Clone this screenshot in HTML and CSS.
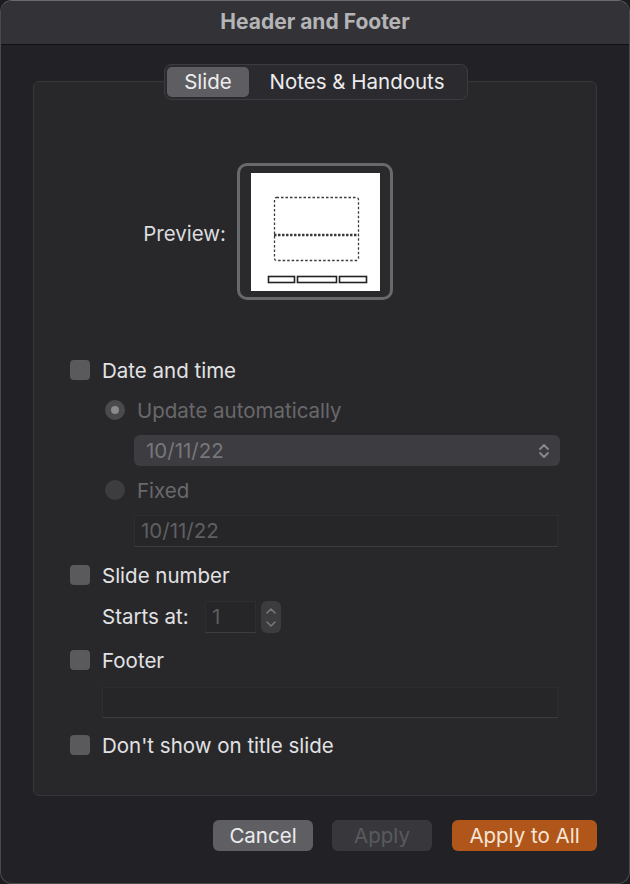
FILE: index.html
```html
<!DOCTYPE html>
<html>
<head>
<meta charset="utf-8">
<link rel="stylesheet" href="styles.css">
</head>
<body>
<div class="window">
  <div class="titlebar">Header and Footer</div>
  <div class="content">
    <div class="tabs">
      <div class="tab active">Slide</div>
      <div class="tab">Notes &amp; Handouts</div>
    </div>
    <div class="group">
      <div class="preview-row">
        <div class="preview-label">Preview:</div>
        <div class="preview-frame">
          <div class="slide">
            <svg width="129" height="118" viewBox="0 0 129 118">
              <rect x="23.5" y="24.5" width="84" height="63" rx="2" fill="none" stroke="#3a3a3a" stroke-width="1.3" stroke-dasharray="2.5 2"/>
              <line x1="23" y1="62" x2="108" y2="62" stroke="#3a3a3a" stroke-width="2.4" stroke-dasharray="2.5 1.5"/>
              <rect x="17.5" y="103.5" width="26" height="6" fill="none" stroke="#222" stroke-width="1.6"/>
              <rect x="46.5" y="103.5" width="39" height="6" fill="none" stroke="#222" stroke-width="1.6"/>
              <rect x="88.5" y="103.5" width="27" height="6" fill="none" stroke="#222" stroke-width="1.6"/>
            </svg>
          </div>
        </div>
      </div>

      <div class="row check-row r-date">
        <span class="checkbox"></span><span class="label">Date and time</span>
      </div>
      <div class="row radio-row r-update">
        <span class="radio selected"></span><span class="label dim">Update automatically</span>
      </div>
      <div class="popup">
        <span class="popup-text">10/11/22</span>
        <svg class="updown" width="12" height="18" viewBox="0 0 12 18">
          <polyline points="2,7 6,3 10,7" fill="none" stroke="#8a8a8d" stroke-width="1.8" stroke-linecap="round" stroke-linejoin="round"/>
          <polyline points="2,11 6,15 10,11" fill="none" stroke="#8a8a8d" stroke-width="1.8" stroke-linecap="round" stroke-linejoin="round"/>
        </svg>
      </div>
      <div class="row radio-row r-fixed">
        <span class="radio"></span><span class="label dim">Fixed</span>
      </div>
      <div class="field date-field">10/11/22</div>

      <div class="row check-row r-slide">
        <span class="checkbox"></span><span class="label">Slide number</span>
      </div>
      <div class="starts-row">
        <span class="label">Starts at:</span>
        <div class="num-field">1</div>
        <div class="stepper">
          <svg width="20" height="32" viewBox="0 0 20 32">
            <polyline points="6,12 10,8 14,12" fill="none" stroke="#77777a" stroke-width="1.6" stroke-linecap="round" stroke-linejoin="round"/>
            <polyline points="6,21 10,25 14,21" fill="none" stroke="#77777a" stroke-width="1.6" stroke-linecap="round" stroke-linejoin="round"/>
          </svg>
        </div>
      </div>
      <div class="row check-row r-footer">
        <span class="checkbox"></span><span class="label">Footer</span>
      </div>
      <div class="field footer-field"></div>
      <div class="row check-row r-dont">
        <span class="checkbox"></span><span class="label">Don't show on title slide</span>
      </div>
    </div>
    <div class="buttons">
      <div class="btn cancel">Cancel</div>
      <div class="btn apply">Apply</div>
      <div class="btn apply-all">Apply to All</div>
    </div>
  </div>
</div>
</body>
</html>
```

FILE: styles.css
```css
* { box-sizing: border-box; }
html, body { margin: 0; padding: 0; background: #1c1c1f; }
body {
  width: 630px;
  height: 884px;
  font-family: Inter, "Open Sans", "Liberation Sans", sans-serif;
  overflow: hidden;
}
.window {
  width: 630px;
  height: 884px;
  border: 1px solid #4a4a4e;
  border-top-color: #6a6a6e;
  border-radius: 12px;
  background: #222226;
  overflow: hidden;
}
.titlebar {
  height: 44px;
  background: #333337;
  border-bottom: 1px solid #111113;
  color: #b4b4b7;
  font-weight: 700;
  font-size: 21px;
  text-align: center;
  line-height: 42px;
}
.content {
  padding: 0 32px 0 32px;
}
.tabs {
  position: relative;
  z-index: 1;
  display: flex;
  width: 304px;
  height: 36px;
  margin: 19px 0 0 131px;
  padding: 2px;
  background: #2b2b2f;
  border: 1px solid #3c3c40;
  border-radius: 7px;
}
.tab {
  color: #ececee;
  font-size: 20.5px;
  line-height: 30px;
  text-align: center;
}
.tab:first-child { width: 82px; }
.tab:last-child { flex: 1; }
.tab.active {
  background: #5e5e62;
  border-radius: 5px;
}
.group {
  margin-top: -19px;
  height: 715px;
  background: #28282b;
  border: 1px solid #37373a;
  border-radius: 6px;
  padding-top: 81px;
}
.preview-row {
  display: flex;
  align-items: center;
}
.preview-label {
  width: 192px;
  text-align: right;
  color: #dcdcde;
  font-size: 20.5px;
  margin-right: 11px;
  padding-top: 3px;
}
.preview-frame {
  width: 156px;
  height: 137px;
  border: 3px solid #69696d;
  border-radius: 10px;
  background: #2a2a2d;
  padding: 7px 0 0 11px;
}
.slide {
  width: 129px;
  height: 118px;
  background: #ffffff;
}
.slide svg { display: block; }

.row {
  display: flex;
  align-items: center;
  height: 24px;
}
.check-row { padding-left: 36px; }
.radio-row { padding-left: 71px; }
.label {
  color: #e2e2e4;
  font-size: 20.5px;
}
.label.dim { color: #68686b; }
.checkbox {
  width: 20px;
  height: 20px;
  border-radius: 4px;
  background: #5a5a5d;
  margin-right: 12px;
  flex: none;
}
.radio {
  width: 20px;
  height: 20px;
  border-radius: 50%;
  background: #3d3d40;
  margin-right: 12px;
  flex: none;
  position: relative;
}
.radio.selected {
  background: #4a4a4d;
}
.radio.selected::after {
  content: "";
  position: absolute;
  left: 6px;
  top: 6px;
  width: 8px;
  height: 8px;
  border-radius: 50%;
  background: #8a8a8d;
}
.r-date { margin-top: 58px; }
.r-update { margin-top: 16px; }
.popup {
  margin: 13px 0 0 100px;
  width: 426px;
  height: 31px;
  background: #3d3d41;
  border-radius: 6px;
  display: flex;
  align-items: center;
  justify-content: space-between;
  padding: 0 10px 0 12px;
}
.popup-text { color: #77777a; font-size: 20.5px; }
.r-fixed { margin-top: 12px; }
.field {
  background: #262629;
  border: 1px solid #2e2e31;
  border-bottom-color: #3c3c3f;
  color: #5f5f62;
  font-size: 20.5px;
}
.date-field {
  margin: 13px 0 0 100px;
  width: 424px;
  height: 32px;
  line-height: 30px;
  padding-left: 6px;
}
.r-slide { margin-top: 16px; }
.starts-row {
  display: flex;
  align-items: center;
  margin-top: 13px;
  padding-left: 68px;
  height: 33px;
}
.starts-row .label { width: 103px; }
.num-field {
  width: 51px;
  height: 32px;
  background: #262629;
  border: 1px solid #2e2e31;
  border-bottom-color: #3d3d40;
  color: #5c5c5f;
  font-size: 20.5px;
  line-height: 30px;
  padding-left: 6px;
}
.stepper {
  margin-left: 5px;
  width: 20px;
  height: 32px;
  background: #3c3c3f;
  border-radius: 6px;
}
.stepper svg { display: block; }
.r-footer { margin-top: 15px; }
.footer-field {
  margin: 15px 0 0 68px;
  width: 456px;
  height: 31px;
}
.r-dont { margin-top: 15px; }

.buttons {
  display: flex;
  justify-content: flex-end;
  margin-top: 24px;
  gap: 19px;
}
.btn {
  height: 31px;
  border-radius: 6px;
  font-size: 20.5px;
  line-height: 31px;
  text-align: center;
}
.cancel { width: 100px; background: #5f5f63; color: #ececee; }
.apply { width: 100px; background: #38383c; color: #5a5a5e; }
.apply-all {
  width: 145px;
  background: #b1561b;
  color: #f6e6d8;
  margin-left: 1px;
}
```
